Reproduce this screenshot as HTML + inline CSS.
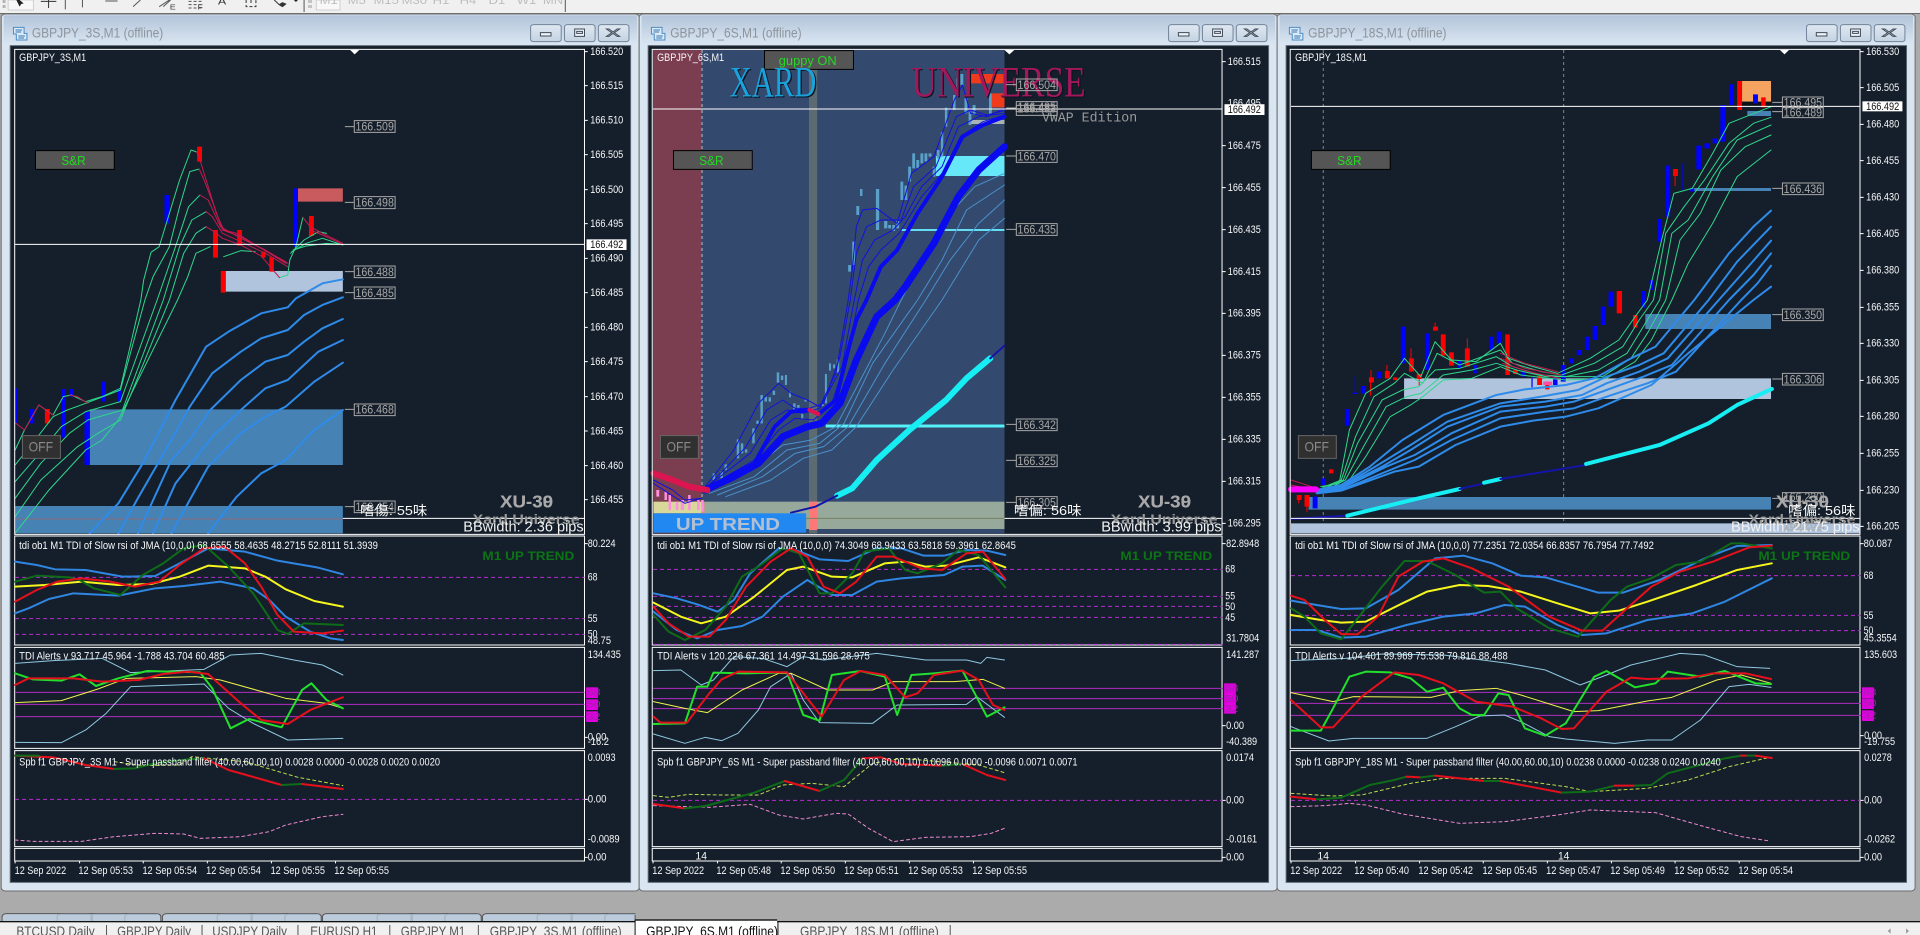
<!DOCTYPE html>
<html><head><meta charset="utf-8"><title>MetaTrader</title>
<style>
html,body{margin:0;padding:0;width:1920px;height:935px;overflow:hidden;background:#ababab}
svg{display:block;position:absolute;left:0;top:0}
svg *{vector-effect:non-scaling-stroke}
text{font-family:"Liberation Sans","Noto Sans CJK SC",sans-serif;font-size:32px;fill:#f6f7f8;stroke:none}
.ttl{font-size:42px;fill:#8d949c}
.tab{font-size:41px;fill:#555}
.tb{font-size:32px;fill:#bdbdbd}
.lb{fill:#a8a8a8;font-size:35px}
.bx{fill:none;stroke:#a8a8a8;stroke-width:1}
.tk{fill:none;stroke:#a8a8a8;stroke-width:1}
.big{font-weight:bold;fill:#a8a8a8;font-size:54px}
.xu2{font-weight:bold;fill:#9a9a9a;font-size:42px}
.bbw{fill:#f2f2f2;font-size:44px}
.cn{fill:#f8f8f8;font-size:40px}
.tr{font-weight:bold;fill:#0b7414;font-size:36px}
.sr{fill:#23d923;font-size:38px}
.off{fill:#8a8a8a;font-size:41px}
.mg{fill:#a81cb0;font-size:30px}
polyline{fill:none;stroke-linejoin:round;stroke-linecap:round}
.g{stroke:#2fd88c;stroke-width:1}
.r{stroke:#c21a4e;stroke-width:1}
.mb{stroke:#2e8bea;stroke-width:2}
.ub{stroke:#2f86e2;stroke-width:2}
.uy{stroke:#f6f61e;stroke-width:2}
.ur{stroke:#e5101c;stroke-width:2}
.ug{stroke:#0e6b18;stroke-width:2}
.lc{stroke:#8fc8e0;stroke-width:1}
.ly{stroke:#f1f14e;stroke-width:1}
.lg{stroke:#22e02c;stroke-width:2}
.dy{stroke:#bcdc4c;stroke-width:1;stroke-dasharray:3 3}
.dp{stroke:#f08ad0;stroke-width:1;stroke-dasharray:3 3}
.dm{stroke:#b52cd0;stroke-width:1;stroke-dasharray:4 3;fill:none}
.sm{stroke:#b02cc4;stroke-width:1;fill:none}
.w{stroke:#fff;stroke-width:1;fill:none}
.dash{stroke:#7d8590;stroke-width:1;stroke-dasharray:3 3;fill:none}
.tb1{stroke:#1212dd;stroke-width:1}
.tl{stroke:#4a92cc;stroke-width:1}
.cy{stroke:#16eef4;stroke-width:4}
.db{stroke:#1414a8;stroke-width:2}
</style></head><body>
<svg width="1920" height="935" viewBox="0 0 1920 935" xmlns="http://www.w3.org/2000/svg">
<defs>
<linearGradient id="tg" x1="0" y1="0" x2="0" y2="1"><stop offset="0" stop-color="#b3c5da"/><stop offset="1" stop-color="#dbe7f3"/></linearGradient>
<linearGradient id="bg" x1="0" y1="0" x2="0" y2="1"><stop offset="0" stop-color="#dfe8f1"/><stop offset="1" stop-color="#c4d3e2"/></linearGradient>
<g id="chrome">
<rect x="3" y="42" width="1563" height="2631" rx="10" fill="#d9e6f2" stroke="#6e6e6e"/>
<rect x="9" y="46" width="1552" height="92" fill="url(#tg)"/>
<rect x="25" y="137" width="1520" height="2510" fill="#151f2b" stroke="#5d6873"/>
<path d="M33 82h26v18h7v20h-26v-18h-7z" fill="#dfe9f5" stroke="#4a8cc4"/>
<path d="M38 90h16M38 96h14M45 108h16M45 114h14" stroke="#2f76b8" fill="none"/>
<g fill="url(#bg)" stroke="#73849a"><rect x="1300" y="74" width="75" height="51" rx="7"/><rect x="1383" y="74" width="75" height="51" rx="7"/><rect x="1466" y="74" width="75" height="51" rx="7"/></g>
<rect x="1324" y="98" width="26" height="10" fill="#eef3f8" stroke="#3f4a58"/>
<rect x="1408" y="87" width="24" height="22" fill="#eef3f8" stroke="#3f4a58"/><rect x="1413" y="94" width="14" height="6" fill="none" stroke="#3f4a58"/>
<path d="M1492 87l10 9 10-9h6l-13 11 13 11h-6l-10-9-10 9h-6l13-11-13-11z" fill="#eef3f8" stroke="#3f4a58"/>
</g>
<g id="panels" class="w">
<rect x="36" y="148" width="1396" height="1455"/>
<rect x="36" y="1608" width="1396" height="327"/>
<rect x="36" y="1942" width="1396" height="303"/>
<rect x="36" y="2252" width="1396" height="288"/>
<rect x="36" y="2545" width="1396" height="38"/>
</g>
<g id="bt"><rect x="0" y="0" width="193" height="56" fill="#555" stroke="#000"/></g>
<g id="of"><rect x="0" y="0" width="93" height="68" fill="#303030" stroke="#666"/></g>
</defs>

<!-- toolbar -->
<rect x="0" y="0" width="1920" height="13" fill="#f0f0f0"/>
<rect x="0" y="13" width="1920" height="1" fill="#6a6a6a"/>
<g transform="scale(.40816 .33333)">
<rect x="20" y="0" width="62" height="30" fill="#f8f8f8" stroke="#cfcfcf"/>
<rect x="775" y="0" width="58" height="30" fill="#f8f8f8" stroke="#cfcfcf"/>
<path d="M40 0l8 20 4-8 6-2-10-10z" fill="#222"/>
<path d="M119 0v24M100 4h38" stroke="#333" fill="none"/>
<path d="M160 0v28M202 0v22M258 3h30M326 20l18-20M745 0v36M1385 0v36" stroke="#555" fill="none"/>
<path d="M8 0v26M12 0v26M757 0v26M762 0v26" stroke="#999" stroke-dasharray="3 2" fill="none"/>
<path d="M390 20l25-20M400 20l18-20" stroke="#555" fill="none"/>
<path d="M462 4h32M462 14h32M462 24h32" stroke="#555" stroke-dasharray="3 2" fill="none"/>
<path d="M603 0v20h24V0M615 0v14" stroke="#333" stroke-dasharray="3 2" fill="none"/>
<path d="M672 0l12 14 8-6 8 4-8 8-8-6" stroke="#333" fill="#333"/><path d="M720 0h10l-5 6z" fill="#222"/>
<text x="416" y="28" style="font-size:22px;fill:#444">E</text><text x="484" y="28" style="font-size:22px;fill:#444">F</text><text x="534" y="14" style="font-size:30px;fill:#333">A</text>
<text class="tb" x="783" y="12">M1</text><text class="tb" x="852" y="12">M5</text><text class="tb" x="915" y="12">M15</text><text class="tb" x="984" y="12">M30</text><text class="tb" x="1060" y="12">H1</text><text class="tb" x="1126" y="12">H4</text><text class="tb" x="1197" y="12">D1</text><text class="tb" x="1266" y="12">W1</text><text class="tb" x="1330" y="12">MN</text>
</g>

<!-- bottom tabs -->
<g transform="translate(0 0) scale(.40816 .33333)">
<path d="M5 2765v-14q0-10 12-10h365q12 0 12 10v14zM398 2765v-14q0-10 12-10h365q12 0 12 10v14zM790 2765v-14q0-10 12-10h365q12 0 12 10v14zM1182 2765v-14q0-10 12-10h362v24z" fill="#bccbdb" stroke="#555"/>
<path d="M140 2765v-14q0-8 8-8h70q8 0 8 8v14M223 2765v-14q0-8 8-8h70M306 2765v-14q0-8 8-8h74M532 2765v-14q0-8 8-8h70q8 0 8 8v14M615 2765v-14q0-8 8-8h70M698 2765v-14q0-8 8-8h74M924 2765v-14q0-8 8-8h70q8 0 8 8v14M1007 2765v-14q0-8 8-8h70M1090 2765v-14q0-8 8-8h74M1316 2765v-14q0-8 8-8h70q8 0 8 8v14M1399 2765v-14q0-8 8-8h70M1482 2765v-14q0-8 8-8h70" fill="none" stroke="#9fb0c2"/>
<rect x="0" y="2764" width="4704" height="41" fill="#f0f0f0"/>
<rect x="0" y="2763" width="4704" height="4" fill="#111"/>
<rect x="1556" y="2762" width="348" height="43" fill="#fff"/>
<rect x="1556" y="2758" width="348" height="4" fill="#111"/>
<path d="M1556 2760v45M1906 2764v41" stroke="#111" stroke-width="1"/>
<path d="M261 2775v30M495 2775v30M730 2775v30M955 2775v30M1172 2775v30M2328 2775v30" stroke="#555" fill="none"/>
<text class="tab" x="40" y="2808" textLength="192" lengthAdjust="spacingAndGlyphs">BTCUSD Daily</text>
<text class="tab" x="287" y="2808" textLength="181" lengthAdjust="spacingAndGlyphs">GBPJPY Daily</text>
<text class="tab" x="520" y="2808" textLength="183" lengthAdjust="spacingAndGlyphs">USDJPY Daily</text>
<text class="tab" x="760" y="2808" textLength="165" lengthAdjust="spacingAndGlyphs">EURUSD H1</text>
<text class="tab" x="982" y="2808" textLength="158" lengthAdjust="spacingAndGlyphs">GBPJPY M1</text>
<text class="tab" x="1200" y="2808" textLength="323" lengthAdjust="spacingAndGlyphs">GBPJPY_3S,M1 (offline)</text>
<text class="tab" style="fill:#111" x="1583" y="2808" textLength="323" lengthAdjust="spacingAndGlyphs">GBPJPY_6S,M1 (offline)</text>
<text class="tab" x="1960" y="2808" textLength="340" lengthAdjust="spacingAndGlyphs">GBPJPY_18S,M1 (offline)</text>
<path d="M4632 2785l-7 8 7 8zM4670 2785l7 8-7 8z" fill="#999"/>
</g>

<!-- WINDOW 1 -->
<g transform="scale(.40816 .33333)">
<use href="#chrome"/>
<text class="ttl" x="78" y="113" textLength="322" lengthAdjust="spacingAndGlyphs">GBPJPY_3S,M1 (offline)</text>
<path d="M553 813h287v62H553z" fill="#b0c4de"/>
<path d="M730 565h110v40H730z" fill="#c95a5e"/>
<path d="M220 1228h620v167H220z" fill="#4682b4"/>
<path d="M37 1518h803v82H37z" fill="#4682b4"/>
<path d="M37 1557h803" stroke="#8c6a78" fill="none"/>
<path d="M403 585h12v85h-12zM718 565h12v175h-12zM37 1165h6v105h-6zM72 1227h12v43H72zM150 1167h11v146h-11zM170 1167h11v23h-11zM248 1145h11v60h-11zM288 1165h10v40h-10zM207 1235h13v160h-13z" fill="#00f"/>
<path d="M483 440h12v45h-12zM522 690h12v83h-12zM581 690h12v47h-12zM640 755h11v18h-11zM660 772h11v43h-11zM757 648h12v60h-12zM541 813h12v65h-12zM110 1227h12v43h-12z" fill="#f00"/>
<polyline class="g" points="37,1350 60,1290 95,1215 130,1245 155,1190 175,1185 210,1205 250,1190 295,1165 345,900 352,840 370,757 390,740 410,660 440,540 468,450 482,456"/>
<polyline class="g" points="37,1395 80,1330 130,1250 165,1230 210,1210 295,1170 355,900 375,830 415,740 440,620 465,515 488,507"/>
<polyline class="g" points="37,1445 90,1370 150,1280 210,1235 295,1205 385,900 430,740 462,620 490,585"/>
<polyline class="g" points="37,1495 100,1390 170,1300 215,1260 300,1230 400,900 440,740 470,660 505,635"/>
<polyline class="g" points="37,1550 100,1440 190,1340 240,1300 295,1260 415,900 450,760 480,700 505,680"/>
<polyline class="g" points="37,1600 120,1470 210,1350 250,1320 290,1260 435,900 460,830 480,760 515,740"/>
<polyline class="g" points="548,770 590,752 625,755"/>
<polyline class="g" points="685,833 705,825 710,780 725,740 742,652"/>
<polyline class="g" points="712,760 745,720 780,695 800,700"/>
<polyline class="g" points="715,755 750,730 790,715 840,735"/>
<polyline class="g" points="718,750 750,738 800,730 840,733"/>
<polyline class="r" points="482,456 490,480 510,560 530,640 548,690 580,700 620,730 660,760 700,790"/>
<polyline class="r" points="488,507 500,540 525,620 545,690 590,710 640,745 700,785"/>
<polyline class="r" points="490,585 510,600 540,680 590,715 650,750 705,790"/>
<polyline class="r" points="505,635 520,650 545,700 590,725 650,760 705,800"/>
<polyline class="r" points="505,680 525,695 545,715 590,735 640,768 685,833"/>
<polyline class="r" points="742,652 760,680 790,700 840,730"/>
<polyline class="r" points="760,690 790,705 840,733"/>
<polyline class="r" points="37,1268 60,1290 95,1215 130,1245"/>
<polyline class="r" points="170,1185 190,1190 215,1210"/>
<polyline class="mb" points="220,1600 290,1510 350,1390 430,1200 505,1040 560,995 640,940 705,922 725,895 790,850 840,838"/>
<polyline class="mb" points="290,1600 340,1490 420,1320 465,1220 520,1120 590,1055 640,1015 705,990 745,945 790,915 840,892"/>
<polyline class="mb" points="338,1600 420,1380 465,1320 515,1230 590,1140 650,1085 705,1065 745,1025 790,985 840,957"/>
<polyline class="mb" points="375,1600 430,1450 520,1310 590,1230 650,1165 705,1140 780,1055 840,1020"/>
<polyline class="mb" points="420,1600 510,1400 590,1300 650,1250 700,1220 770,1145 840,1088"/>
<polyline class="mb" points="510,1600 580,1490 640,1420 700,1380 770,1290 840,1230"/>
<rect x="1437" y="718" width="98" height="32" fill="#fff"/>
<path d="M37 733h1395" class="w"/>
<path d="M840 1555h592" class="w"/>
<use href="#panels"/>
<path d="M858 150h22l-11 13z" fill="#fff"/>
<path d="M1432 155h8M1432 257h8M1432 361h8M1432 464h8M1432 569h8M1432 671h8M1432 775h8M1432 878h8M1432 982h8M1432 1085h8M1432 1190h8M1432 1293h8M1432 1397h8M1432 1499h8M1432 1631h8M1432 2212h8M1432 2398h8M1432 2572h8M37 2583v7M195 2583v7M351 2583v7M508 2583v7M665 2583v7M822 2583v7" class="w"/>
<text x="47" y="183" textLength="164" lengthAdjust="spacingAndGlyphs">GBPJPY_3S,M1</text>
<g><text x="1446" y="165" textLength="81" lengthAdjust="spacingAndGlyphs">166.520</text><text x="1446" y="267" textLength="81" lengthAdjust="spacingAndGlyphs">166.515</text><text x="1446" y="371" textLength="81" lengthAdjust="spacingAndGlyphs">166.510</text><text x="1446" y="474" textLength="81" lengthAdjust="spacingAndGlyphs">166.505</text><text x="1446" y="579" textLength="81" lengthAdjust="spacingAndGlyphs">166.500</text><text x="1446" y="681" textLength="81" lengthAdjust="spacingAndGlyphs">166.495</text><text x="1446" y="785" textLength="81" lengthAdjust="spacingAndGlyphs">166.490</text><text x="1446" y="888" textLength="81" lengthAdjust="spacingAndGlyphs">166.485</text><text x="1446" y="992" textLength="81" lengthAdjust="spacingAndGlyphs">166.480</text><text x="1446" y="1095" textLength="81" lengthAdjust="spacingAndGlyphs">166.475</text><text x="1446" y="1200" textLength="81" lengthAdjust="spacingAndGlyphs">166.470</text><text x="1446" y="1303" textLength="81" lengthAdjust="spacingAndGlyphs">166.465</text><text x="1446" y="1407" textLength="81" lengthAdjust="spacingAndGlyphs">166.460</text><text x="1446" y="1509" textLength="81" lengthAdjust="spacingAndGlyphs">166.455</text></g>
<text style="fill:#111" x="1446" y="744" textLength="81" lengthAdjust="spacingAndGlyphs">166.492</text>
<g transform="translate(87 452)"><use href="#bt"/></g><text class="sr" x="150" y="495" textLength="60" lengthAdjust="spacingAndGlyphs">S&amp;R</text>
<g transform="translate(55 1307)"><use href="#of"/></g><text class="off" x="70" y="1355" textLength="60" lengthAdjust="spacingAndGlyphs">OFF</text>
<path class="tk" d="M845 380h23M845 607h23M845 815h23M845 878h23M845 1228h23M845 1520h23"/>
<rect class="bx" x="868" y="362" width="100" height="35"/><rect class="bx" x="868" y="590" width="100" height="36"/><rect class="bx" x="868" y="798" width="100" height="35"/><rect class="bx" x="868" y="861" width="100" height="35"/><rect class="bx" x="868" y="1212" width="100" height="35"/><rect class="bx" x="868" y="1503" width="100" height="35"/>
<text class="lb" x="871" y="392" textLength="94" lengthAdjust="spacingAndGlyphs">166.509</text><text class="lb" x="871" y="620" textLength="94" lengthAdjust="spacingAndGlyphs">166.498</text><text class="lb" x="871" y="828" textLength="94" lengthAdjust="spacingAndGlyphs">166.488</text><text class="lb" x="871" y="891" textLength="94" lengthAdjust="spacingAndGlyphs">166.485</text><text class="lb" x="871" y="1241" textLength="94" lengthAdjust="spacingAndGlyphs">166.468</text><text class="lb" x="871" y="1533" textLength="94" lengthAdjust="spacingAndGlyphs">166.454</text>
<text class="cn" x="882" y="1545" textLength="165" lengthAdjust="spacingAndGlyphs">嗜傷: 55味</text>
<text class="big" x="1225" y="1522" textLength="130" lengthAdjust="spacingAndGlyphs">XU-30</text><text class="big" x="1225" y="1522" textLength="130" lengthAdjust="spacingAndGlyphs">XU-39</text>
<text class="xu2" x="1158" y="1572" textLength="262" lengthAdjust="spacingAndGlyphs">Xard Universe</text>
<text class="bbw" x="1135" y="1594" textLength="295" lengthAdjust="spacingAndGlyphs">BBwidth: 2.36 pips</text>
<!-- tdi -->
<path class="dm" d="M37 1732h1395M37 1856h1395M37 1903h1395"/>
<polyline class="ub" points="37,1685 90,1695 135,1708 210,1710 300,1730 380,1728 440,1690 510,1645 600,1655 680,1682 780,1703 840,1723"/>
<polyline class="ub" points="37,1840 70,1825 120,1797 180,1780 290,1787 380,1765 450,1758 540,1745 620,1765 660,1800 700,1850 760,1895 810,1915 840,1920"/>
<polyline class="uy" points="37,1760 110,1755 200,1745 290,1755 370,1752 440,1730 510,1697 600,1705 650,1730 700,1768 770,1803 840,1820"/>
<polyline class="ug" points="37,1745 90,1727 170,1732 195,1740 230,1765 295,1785 350,1725 400,1690 450,1645 500,1635 560,1700 620,1780 680,1890 705,1902 745,1870 840,1875"/>
<polyline class="ur" points="37,1805 90,1770 140,1745 200,1735 270,1745 330,1760 390,1745 440,1695 500,1645 550,1640 600,1690 640,1760 680,1845 720,1895 790,1900 840,1892"/>
<text x="47" y="1647" textLength="879" lengthAdjust="spacingAndGlyphs">tdi ob1 M1 TDI of Slow rsi of JMA (10,0,0) 68.6555 58.4635 48.2715 52.8111 51.3939</text>
<text class="tr" x="1182" y="1680" textLength="225" lengthAdjust="spacingAndGlyphs">M1 UP TREND</text>
<text x="1440" y="1641" textLength="68" lengthAdjust="spacingAndGlyphs">80.224</text><text x="1440" y="1742" textLength="24" lengthAdjust="spacingAndGlyphs">68</text><text x="1440" y="1866" textLength="24" lengthAdjust="spacingAndGlyphs">55</text><text x="1440" y="1913" textLength="24" lengthAdjust="spacingAndGlyphs">50</text><text x="1440" y="1932" textLength="57" lengthAdjust="spacingAndGlyphs">48.75</text>
<!-- alerts -->
<path class="sm" d="M37 2077h1395M37 2113h1395M37 2150h1395"/>
<rect x="1436" y="2062" width="29" height="32" fill="#e000e0"/><rect x="1436" y="2098" width="29" height="32" fill="#e000e0"/><rect x="1436" y="2134" width="29" height="32" fill="#e000e0"/>
<text class="mg" x="1438" y="2087">68</text><text class="mg" x="1438" y="2123">50</text><text class="mg" x="1438" y="2160">32</text>
<polyline class="lc" points="37,1990 130,1982 250,1975 320,2018 500,2008 565,1965 640,1960 720,1980 790,1995 840,2025"/>
<polyline class="lc" points="37,2227 150,2228 210,2190 260,2140 320,2060 500,2052 560,2125 620,2170 705,2220 840,2215"/>
<polyline class="ly" points="37,2108 150,2102 240,2067 310,2035 480,2030 540,2040 700,2095 800,2110 840,2125"/>
<polyline class="lg" points="37,2020 80,2038 150,2042 195,2023 235,2058 290,2035 360,2013 490,2017 520,2065 565,2185 610,2157 690,2182 740,2070 763,2050 800,2100 840,2125"/>
<polyline class="ur" points="37,2055 70,2035 180,2035 250,2045 340,2040 400,2022 460,2015 510,2022 590,2110 640,2160 705,2172 760,2130 840,2092"/>
<text x="47" y="1978" textLength="503" lengthAdjust="spacingAndGlyphs">TDI Alerts v 93.717 45.964 -1.788 43.704 60.485</text>
<text x="1440" y="1974" textLength="81" lengthAdjust="spacingAndGlyphs">134.435</text><text x="1440" y="2222" textLength="46" lengthAdjust="spacingAndGlyphs">0.00</text><text x="1440" y="2235" textLength="52" lengthAdjust="spacingAndGlyphs">-16.2</text>
<!-- spb -->
<path class="dm" d="M37 2398h1395"/>
<polyline class="dy" points="280,2285 350,2297 440,2295 470,2270 600,2285 730,2332 840,2357"/>
<polyline class="dp" points="37,2520 80,2524 200,2524 280,2510 380,2500 450,2502 490,2515 590,2510 660,2495 700,2475 790,2450 840,2443"/>
<polyline class="ur" points="37,2267 130,2272 210,2295 280,2307"/><polyline class="ug" points="37,2267 95,2267" /><polyline class="ug" points="280,2307 330,2305 380,2290 460,2278 500,2275"/><polyline class="ur" points="500,2275 560,2310 690,2355"/><polyline class="ug" points="690,2355 740,2352"/><polyline class="ur" points="740,2352 840,2367"/>
<text x="47" y="2297" textLength="1031" lengthAdjust="spacingAndGlyphs">Spb f1 GBPJPY_3S M1 - Super passband filter (40.00,60.00,10) 0.0028 0.0000 -0.0028 0.0020 0.0020</text>
<text x="1440" y="2283" textLength="68" lengthAdjust="spacingAndGlyphs">0.0093</text><text x="1440" y="2408" textLength="46" lengthAdjust="spacingAndGlyphs">0.00</text><text x="1440" y="2528" textLength="78" lengthAdjust="spacingAndGlyphs">-0.0089</text>
<text x="1440" y="2582" textLength="46" lengthAdjust="spacingAndGlyphs">0.00</text>
<text x="36" y="2622" textLength="126" lengthAdjust="spacingAndGlyphs">12 Sep 2022</text><text x="192" y="2622" textLength="134" lengthAdjust="spacingAndGlyphs">12 Sep 05:53</text><text x="349" y="2622" textLength="134" lengthAdjust="spacingAndGlyphs">12 Sep 05:54</text><text x="505" y="2622" textLength="134" lengthAdjust="spacingAndGlyphs">12 Sep 05:54</text><text x="663" y="2622" textLength="133" lengthAdjust="spacingAndGlyphs">12 Sep 05:55</text><text x="819" y="2622" textLength="134" lengthAdjust="spacingAndGlyphs">12 Sep 05:55</text>
</g>

<!-- WINDOW 2 -->
<g transform="translate(640 0) scale(.40816 .33333)">
<use href="#chrome" x="-5"/>
<text class="ttl" x="74" y="113" textLength="322" lengthAdjust="spacingAndGlyphs">GBPJPY_6S,M1 (offline)</text>
<rect x="32" y="150" width="119" height="1450" fill="#7a3e50"/>
<rect x="151" y="150" width="742" height="1450" fill="#34496e"/>
<rect x="414" y="150" width="20" height="1450" fill="#5c6a72"/>
<rect x="33" y="1505" width="118" height="35" fill="#d8d89a"/>
<rect x="158" y="1505" width="735" height="82" fill="#96a99a"/>
<rect x="414" y="1505" width="20" height="85" fill="#ff7878"/>
<path d="M151 1505h7v85h-7z" fill="#e88a80"/>
<path d="M158 1555h735" stroke="#777f5f" fill="none"/>
<path class="dash" style="stroke:#b8bcc4" d="M152 150v1370"/>
<path d="M805 222h88v28h-88zM862 280h31v42h-31z" fill="#f03a1c"/>
<rect x="725" y="468" width="168" height="60" fill="#67e8f9"/>
<rect x="805" y="360" width="88" height="12" fill="#a7b4b4"/>
<path d="M640 690h253" stroke="#64dcf2" stroke-width="2" fill="none"/>
<path d="M455 1278h438" stroke="#55f0f8" stroke-width="3" fill="none"/>
<path d="M520 725h7v70h-7zM510 795h7v20h-7zM530 618h7v27h-7zM539 567h6v21h-6zM578 567h8v123h-8zM598 663h8v22h-8zM608 675h7v10h-7zM618 675h7v18h-7zM628 663h7v22h-7zM638 545h7v55h-7zM648 557h7v43h-7zM657 500h7v45h-7zM667 460h7v45h-7zM677 480h7v25h-7zM687 460h7v30h-7zM697 460h7v25h-7zM707 460h7v10h-7zM717 500h7v30h-7zM727 450h7v25h-7zM737 397h6v73h-6zM747 323h6v57h-6zM767 285h6v45h-6zM775 235h7v35h-7zM785 222h7v33h-7zM795 295h7v45h-7zM805 330h7v45h-7zM815 315h7v30h-7zM855 280h7v65h-7zM178 1420h6v20h-6zM197 1415h6v20h-6zM207 1393h6v17h-6zM237 1318h6v57h-6zM247 1330h6v30h-6zM257 1348h6v10h-6zM275 1285h6v45h-6zM285 1262h6v10h-6zM295 1185h6v85h-6zM305 1190h6v15h-6zM315 1192h6v13h-6zM325 1172h6v13h-6zM335 1117h6v31h-6zM345 1127h6v13h-6zM355 1125h5v30h-5zM365 1175h5v17h-5zM375 1210h6v20h-6zM385 1215h6v15h-6zM395 1240h5v15h-5zM403 1198h5v7h-5zM444 1205h6v13h-6zM453 1122h5v88h-5zM463 1090h5v22h-5zM473 1093h5v12h-5zM482 1078h6v40h-6z" fill="#5aa0c8"/>
<path d="M40 1470h7v20h-7zM60 1475h6v25h-6zM70 1485h6v45h-6zM88 1505h6v25h-6zM100 1500h8v30h-8zM118 1485h6v45h-6zM140 1500h6v30h-6zM150 1500h6v35h-6z" fill="#ff90e0"/>
<polyline class="tb1" points="510,900 520,810 530,680 545,630 580,625 630,670 665,520 720,470 770,300 790,255 810,340 850,350 893,325"/>
<polyline class="tb1" points="515,900 530,760 555,680 590,660 640,660 670,560 725,500 775,350 810,330 850,345 893,332"/>
<polyline class="tb1" points="525,900 545,780 575,720 620,690 650,650 690,560 740,500 780,380 830,350 893,340"/>
<polyline class="tb1" points="535,900 560,800 590,750 635,700 690,590 740,520 785,410 840,365 893,345"/>
<polyline class="tb1" points="160,1460 230,1350 290,1210 340,1150 370,1180 410,1200 440,1220 480,1120 510,900"/>
<polyline class="tb1" points="170,1455 260,1340 310,1230 350,1200 380,1225 415,1225 450,1210 490,1070 515,900"/>
<polyline class="tb1" points="165,1460 270,1360 320,1260 360,1230 400,1240 440,1225 495,1100 525,900"/>
<polyline class="tb1" points="165,1462 280,1380 340,1290 380,1255 425,1260 470,1210 510,1060 535,900"/>
<polyline class="tl" points="160,1470 260,1420 350,1335 420,1320 480,1280 540,1140 600,1000 640,900 700,760 760,640 820,560 893,520"/>
<polyline class="tl" points="170,1480 280,1430 360,1350 440,1330 500,1270 570,1090 680,900 740,780 800,630 893,555"/>
<polyline class="tl" points="190,1485 300,1430 380,1360 450,1340 510,1280 600,1090 700,900 760,780 830,670 893,600"/>
<polyline class="tl" points="210,1490 320,1440 400,1375 470,1350 530,1280 620,1110 740,900 790,800 830,720 893,655"/>
<polyline style="stroke:#0a0aee;stroke-width:4" points="165,1465 280,1390 330,1280 370,1235 415,1230"/>
<polyline style="stroke:#0a0aee;stroke-width:4" points="440,1240 480,1200 510,1050 530,960 555,900 590,800 630,750 680,640 740,530 790,410 840,375 893,350"/>
<polyline style="stroke:#0a0aee;stroke-width:7" points="160,1470 230,1430 290,1390 350,1310 410,1280 445,1270 490,1210 530,1080 580,950 625,900 650,860 720,730 780,590 830,510 893,440"/>
<polyline style="stroke:#dc1450;stroke-width:6" points="33,1420 80,1440 120,1460 165,1470"/>
<polyline style="stroke:#dc1450;stroke-width:4" points="415,1230 437,1242"/>
<polyline class="tb1" points="33,1440 80,1470 110,1500 150,1495"/><polyline class="tb1" points="33,1450 70,1480 110,1510 150,1495"/>
<polyline class="cy" style="stroke-width:6" points="483,1487 520,1465 580,1380 660,1290 750,1200 800,1135 858,1075"/>
<polyline class="db" points="858,1075 893,1037"/>
<polyline class="db" points="370,1538 430,1520 483,1487"/>
<rect x="33" y="1540" width="374" height="58" fill="#2088f0"/>
<text style="font-weight:bold;fill:#b4c0d2;font-size:52px" x="88" y="1590" textLength="255" lengthAdjust="spacingAndGlyphs">UP TREND</text>
<rect x="1432" y="313" width="98" height="32" fill="#fff"/>
<path d="M32 327h1395" class="w"/>
<path d="M893 1555h534" class="w"/>
<use href="#panels" x="-6"/>
<path d="M893 150h24l-12 13z" fill="#fff"/>
<path d="M1427 185h8M1427 437h8M1427 563h8M1427 689h8M1427 815h8M1427 940h8M1427 1066h8M1427 1192h8M1427 1318h8M1427 1444h8M1427 1570h8M1427 1631h8M1427 2177h8M1427 2401h8M1427 2572h8M32 2583v7M190 2583v7M346 2583v7M503 2583v7M660 2583v7M817 2583v7" class="w"/>
<text x="42" y="183" textLength="164" lengthAdjust="spacingAndGlyphs">GBPJPY_6S,M1</text>
<g transform="translate(305 152)"><rect width="218" height="56" fill="#555" stroke="#000"/></g><text class="sr" x="340" y="195" textLength="142" lengthAdjust="spacingAndGlyphs">guppy ON</text>
<g style="font-family:'Liberation Serif',serif"><text x="223" y="293" style="font-family:'Liberation Serif',serif;font-size:130px;fill:#0a1420" textLength="212" lengthAdjust="spacingAndGlyphs">XARD</text><text x="220" y="290" style="font-family:'Liberation Serif',serif;font-size:130px;fill:#1aa2dc" textLength="212" lengthAdjust="spacingAndGlyphs">XARD</text>
<text x="668" y="293" style="font-family:'Liberation Serif',serif;font-size:130px;fill:#0a1420" textLength="427" lengthAdjust="spacingAndGlyphs">UNIVERSE</text><text x="665" y="290" style="font-family:'Liberation Serif',serif;font-size:130px;fill:#a3185c" textLength="427" lengthAdjust="spacingAndGlyphs">UNIVERSE</text>
<text x="985" y="365" style="font-family:'Liberation Mono',monospace;font-size:42px;fill:#9a9a9a" textLength="233" lengthAdjust="spacingAndGlyphs">VWAP Edition</text></g>
<text x="1440" y="195" textLength="81" lengthAdjust="spacingAndGlyphs">166.515</text><text x="1440" y="320" textLength="81" lengthAdjust="spacingAndGlyphs">166.495</text><rect x="1432" y="313" width="98" height="32" fill="#fff"/><text x="1440" y="447" textLength="81" lengthAdjust="spacingAndGlyphs">166.475</text><text x="1440" y="573" textLength="81" lengthAdjust="spacingAndGlyphs">166.455</text><text x="1440" y="699" textLength="81" lengthAdjust="spacingAndGlyphs">166.435</text><text x="1440" y="825" textLength="81" lengthAdjust="spacingAndGlyphs">166.415</text><text x="1440" y="950" textLength="81" lengthAdjust="spacingAndGlyphs">166.395</text><text x="1440" y="1076" textLength="81" lengthAdjust="spacingAndGlyphs">166.375</text><text x="1440" y="1202" textLength="81" lengthAdjust="spacingAndGlyphs">166.355</text><text x="1440" y="1328" textLength="81" lengthAdjust="spacingAndGlyphs">166.335</text><text x="1440" y="1454" textLength="81" lengthAdjust="spacingAndGlyphs">166.315</text><text x="1440" y="1580" textLength="81" lengthAdjust="spacingAndGlyphs">166.295</text>
<text style="fill:#111" x="1440" y="339" textLength="81" lengthAdjust="spacingAndGlyphs">166.492</text>
<g transform="translate(82 452)"><use href="#bt"/></g><text class="sr" x="145" y="495" textLength="60" lengthAdjust="spacingAndGlyphs">S&amp;R</text>
<g transform="translate(50 1307)"><use href="#of"/></g><text class="off" x="65" y="1355" textLength="60" lengthAdjust="spacingAndGlyphs">OFF</text>
<path class="tk" d="M897 254h25M897 324h25M897 468h25M897 688h25M897 1273h25M897 1381h25M897 1507h25"/>
<rect class="bx" x="922" y="237" width="100" height="35"/><rect class="bx" x="922" y="305" width="100" height="30"/><rect class="bx" x="922" y="316" width="100" height="30"/><rect class="bx" x="922" y="452" width="100" height="35"/><rect class="bx" x="922" y="671" width="100" height="35"/><rect class="bx" x="922" y="1257" width="100" height="35"/><rect class="bx" x="922" y="1365" width="100" height="35"/><rect class="bx" x="922" y="1490" width="100" height="35"/>
<text class="lb" x="925" y="267" textLength="94" lengthAdjust="spacingAndGlyphs">166.504</text><text class="lb" x="925" y="333" textLength="94" lengthAdjust="spacingAndGlyphs">166.485</text><text class="lb" x="925" y="337" textLength="94" lengthAdjust="spacingAndGlyphs">166.483</text><text class="lb" x="925" y="482" textLength="94" lengthAdjust="spacingAndGlyphs">166.470</text><text class="lb" x="925" y="701" textLength="94" lengthAdjust="spacingAndGlyphs">166.435</text><text class="lb" x="925" y="1287" textLength="94" lengthAdjust="spacingAndGlyphs">166.342</text><text class="lb" x="925" y="1395" textLength="94" lengthAdjust="spacingAndGlyphs">166.325</text><text class="lb" x="925" y="1520" textLength="94" lengthAdjust="spacingAndGlyphs">166.305</text>
<text class="cn" x="916" y="1545" textLength="166" lengthAdjust="spacingAndGlyphs">嗜偏: 56味</text>
<text class="big" x="1220" y="1522" textLength="130" lengthAdjust="spacingAndGlyphs">XU-30</text><text class="big" x="1220" y="1522" textLength="130" lengthAdjust="spacingAndGlyphs">XU-39</text>
<text class="xu2" x="1153" y="1572" textLength="262" lengthAdjust="spacingAndGlyphs">Xard Universe</text>
<text class="bbw" x="1130" y="1594" textLength="295" lengthAdjust="spacingAndGlyphs">BBwidth: 3.99 pips</text>
<!-- tdi -->
<path class="dm" d="M32 1708h1395M32 1789h1395M32 1819h1395M32 1852h1395M32 1933h1395"/>
<polyline class="ub" points="33,1780 90,1795 140,1813 190,1835 230,1800 270,1720 340,1645 380,1650 440,1678 510,1683 580,1645 640,1645 695,1667 745,1667 800,1650 850,1652 895,1665"/>
<polyline class="ub" points="33,1835 90,1890 140,1915 190,1890 250,1878 300,1850 350,1790 410,1740 470,1785 520,1785 580,1745 640,1735 745,1725 790,1700 840,1697 895,1740"/>
<polyline class="uy" points="33,1808 100,1850 150,1870 210,1850 280,1790 360,1710 400,1700 470,1730 520,1732 600,1690 650,1685 700,1700 750,1697 830,1672 895,1702"/>
<polyline class="ug" points="33,1845 70,1895 110,1920 160,1890 210,1820 250,1730 290,1700 350,1645 390,1660 440,1780 470,1780 520,1720 550,1655 610,1645 650,1710 680,1720 740,1690 780,1650 830,1665 895,1762"/>
<polyline class="ur" points="33,1820 70,1870 120,1910 170,1910 210,1860 260,1760 320,1685 370,1645 410,1670 450,1760 490,1780 530,1745 580,1670 620,1670 690,1705 740,1710 800,1660 840,1655 895,1737"/>
<text x="42" y="1647" textLength="879" lengthAdjust="spacingAndGlyphs">tdi ob1 M1 TDI of Slow rsi of JMA (10,0,0) 74.3049 68.9433 63.5818 59.3961 62.8645</text>
<text class="tr" x="1177" y="1680" textLength="225" lengthAdjust="spacingAndGlyphs">M1 UP TREND</text>
<text x="1436" y="1641" textLength="81" lengthAdjust="spacingAndGlyphs">82.8948</text><text x="1434" y="1718" textLength="24" lengthAdjust="spacingAndGlyphs">68</text><text x="1434" y="1799" textLength="24" lengthAdjust="spacingAndGlyphs">55</text><text x="1434" y="1830" textLength="24" lengthAdjust="spacingAndGlyphs">50</text><text x="1434" y="1863" textLength="24" lengthAdjust="spacingAndGlyphs">45</text><text x="1436" y="1925" textLength="81" lengthAdjust="spacingAndGlyphs">31.7804</text>
<!-- alerts -->
<path class="sm" d="M32 2065h1395M32 2096h1395M32 2126h1395"/>
<rect x="1431" y="2050" width="29" height="91" fill="#e000e0"/>
<text class="mg" x="1433" y="2075">68</text><text class="mg" x="1433" y="2106">50</text><text class="mg" x="1433" y="2136">32</text>
<polyline class="lc" points="33,2012 100,2010 150,2055 180,2040 230,1970 300,1975 360,2000 400,1970 450,1980 580,1960 700,1980 800,1980 835,1990 850,1972 893,1980"/>
<polyline class="lc" points="33,2202 110,2230 160,2212 200,2222 240,2200 290,2130 320,2060 370,2020 400,2100 440,2168 570,2170 630,2115 800,2113 825,2090 893,2152"/>
<polyline class="ly" points="33,2105 110,2125 165,2138 250,2070 340,2020 370,2020 460,2070 570,2070 620,2045 770,2045 840,2038 893,2065"/>
<polyline class="lg" points="33,2172 110,2170 140,2060 165,2060 180,2018 260,2020 360,2017 400,2145 440,2162 470,2025 540,2013 600,2030 630,2145 665,2025 720,2020 790,2012 820,2080 850,2150 893,2122"/>
<polyline class="ur" points="33,2150 50,2168 115,2168 170,2080 200,2038 240,2015 360,2017 445,2150 500,2040 540,2013 600,2025 650,2092 680,2080 720,2025 790,2012 830,2040 865,2115 893,2130"/>
<text x="42" y="1978" textLength="521" lengthAdjust="spacingAndGlyphs">TDI Alerts v 120.226 67.361 14.497 31.596 28.975</text>
<text x="1436" y="1974" textLength="81" lengthAdjust="spacingAndGlyphs">141.287</text><text x="1436" y="2187" textLength="44" lengthAdjust="spacingAndGlyphs">0.00</text><text x="1436" y="2235" textLength="76" lengthAdjust="spacingAndGlyphs">-40.389</text>
<!-- spb -->
<path class="dm" d="M32 2401h1395"/>
<polyline class="dy" points="33,2387 70,2392 120,2383 200,2385 290,2385 350,2355 420,2350 500,2360 570,2290 640,2275 830,2295 893,2318"/>
<polyline class="dp" points="33,2417 170,2422 270,2413 340,2445 400,2457 480,2440 510,2442 560,2485 620,2525 700,2512 810,2510 860,2500 893,2485"/>
<polyline class="ur" points="33,2412 110,2425"/><polyline class="ug" points="110,2425 160,2418 280,2378 355,2343"/><polyline class="ur" points="355,2343 440,2373"/><polyline class="ug" points="440,2373 500,2340 545,2275"/><polyline class="ur" points="545,2275 590,2272 640,2292 740,2297"/><polyline class="ug" points="740,2297 790,2292"/><polyline class="ur" points="790,2292 850,2325 895,2340"/>
<text x="42" y="2297" textLength="1030" lengthAdjust="spacingAndGlyphs">Spb f1 GBPJPY_6S M1 - Super passband filter (40.00,60.00,10) 0.0096 0.0000 -0.0096 0.0071 0.0071</text>
<text x="1436" y="2283" textLength="68" lengthAdjust="spacingAndGlyphs">0.0174</text><text x="1436" y="2411" textLength="44" lengthAdjust="spacingAndGlyphs">0.00</text><text x="1436" y="2528" textLength="76" lengthAdjust="spacingAndGlyphs">-0.0161</text>
<text x="1436" y="2582" textLength="44" lengthAdjust="spacingAndGlyphs">0.00</text>
<text x="136" y="2579" textLength="28" lengthAdjust="spacingAndGlyphs">14</text>
<text x="30" y="2622" textLength="127" lengthAdjust="spacingAndGlyphs">12 Sep 2022</text><text x="187" y="2622" textLength="134" lengthAdjust="spacingAndGlyphs">12 Sep 05:48</text><text x="344" y="2622" textLength="134" lengthAdjust="spacingAndGlyphs">12 Sep 05:50</text><text x="500" y="2622" textLength="134" lengthAdjust="spacingAndGlyphs">12 Sep 05:51</text><text x="657" y="2622" textLength="134" lengthAdjust="spacingAndGlyphs">12 Sep 05:53</text><text x="814" y="2622" textLength="134" lengthAdjust="spacingAndGlyphs">12 Sep 05:55</text>
</g>

<!-- WINDOW 3 -->
<g transform="translate(1280 0) scale(.40816 .33333)">
<use href="#chrome" x="-10"/>
<text class="ttl" x="69" y="113" textLength="339" lengthAdjust="spacingAndGlyphs">GBPJPY_18S,M1 (offline)</text>
<path class="dash" d="M106 150v1450M695 150v1450"/>
<rect x="1132" y="243" width="71" height="62" fill="#f4a460"/>
<rect x="1132" y="305" width="71" height="15" fill="#0c1218"/>
<path d="M1145 333h58v15h-58zM1005 564h198v9h-198zM895 942h308v45H895zM70 1491h1133v38H70z" fill="#4682b4"/>
<path d="M304 1135h899v62H304zM27 1570h1395v30H27z" fill="#b0c4de"/>
<path d="M1100 253h12v62h-12zM1159 283h12v27h-12zM1079 315h12v110h-12zM1060 415h12v15h-12zM1040 430h12v15h-12zM1020 437h12v71h-12zM944 497h12v153h-12zM924 657h12v68h-12zM986 490h3v80h-3zM1005 565h10v10h-10zM904 840h10v30h-10zM885 873h11v50h-11zM805 875h12v45h-12zM786 920h12v55h-12zM766 978h12v42h-12zM747 1010h10v40h-10zM727 1050h11v15h-11zM708 1075h10v15h-10zM688 1095h12v50h-12zM669 1132h11v23h-11zM616 1130h3v32h-3zM590 1115h10v15h-10zM512 1010h10v40h-10zM531 995h12v35h-12zM473 1095h9v25h-9zM434 1080h11v25h-11zM355 1000h12v110h-12zM296 980h12v110h-12zM237 1115h12v20h-12zM198 1158h12v22h-12zM183 1130h3v50h-3zM178 1178h12v4h-12zM159 1227h12v50h-12zM100 1435h12v20h-12zM80 1490h12v35H80z" fill="#00f"/>
<path d="M1120 243h12v87h-12zM1179 292h11v30h-11zM963 507h12v21h-12zM825 873h13v67h-13zM865 945h11v38h-11zM552 1003h11v122h-11zM571 1110h12v12h-12zM630 1128h12v27h-12zM650 1145h10v23h-10zM453 1045h12v55h-12zM414 1057h12v40h-12zM394 1003h12v64h-12zM375 980h12v12h-12zM335 1122h12v15h-12zM316 1075h12v40h-12zM257 1113h12v22h-12zM218 1132h12v15h-12zM277 1132h10v8h-10zM120 1408h11v12h-11zM60 1485h12v35H60zM41 1485h12v15H41z" fill="#f00"/>
<path d="M968 528v30M321 1045v30M341 1137v20M262 1095v18M223 1110v22M222 1147v40M459 1015v30M380 968v12M66 1520v15M46 1500v10" stroke="#f00" fill="none"/>
<path d="M645 1145h22v10h-22z" fill="#ff4da6"/>
<polyline class="g" points="100,1460 145,1450 170,1290 210,1180 270,1135 305,1075 345,1130 380,1025 420,1080 480,1085 540,1030 560,1075 620,1100 680,1120 760,1075 830,1020 870,950 900,900 935,720 965,580 1010,565 1060,460 1100,370 1203,320"/>
<polyline class="g" points="105,1462 150,1440 185,1310 230,1190 280,1150 305,1120 350,1150 385,1060 440,1095 540,1050 570,1090 640,1115 690,1125 770,1090 840,1040 880,960 915,900 945,700 990,620 1040,540 1100,430 1160,370 1203,352"/>
<polyline class="g" points="110,1464 155,1440 190,1330 250,1200 300,1170 340,1160 380,1110 440,1105 530,1070 570,1100 640,1125 700,1130 780,1110 850,1060 890,980 930,900 960,700 1000,660 1060,530 1120,420 1203,375"/>
<polyline class="g" points="120,1466 160,1440 200,1350 260,1220 310,1190 345,1180 400,1125 470,1110 530,1090 580,1110 650,1130 710,1130 790,1130 860,1075 900,1000 945,900 980,720 1030,640 1080,510 1140,440 1203,405"/>
<polyline class="g" points="130,1468 170,1440 210,1370 270,1250 320,1215 350,1190 400,1140 470,1135 540,1100 590,1125 660,1135 700,1140 800,1135 870,1085 910,1020 960,900 1000,790 1060,670 1120,530 1203,450"/>
<polyline class="r" points="540,1060 600,1090 680,1115"/><polyline class="r" points="540,1075 600,1105 690,1125"/><polyline class="r" points="545,1090 610,1115 685,1135"/>
<polyline class="r" points="27,1440 90,1465"/><polyline class="r" points="27,1455 90,1470"/>
<polyline class="mb" points="90,1470 150,1455 220,1400 300,1320 400,1245 530,1185 600,1168 700,1155 770,1135 860,1075 920,1040 1015,900 1100,760 1160,680 1203,632"/>
<polyline class="mb" points="90,1472 150,1460 240,1395 320,1335 410,1265 540,1210 640,1190 730,1170 800,1130 880,1095 940,1060 1050,900 1120,785 1203,680"/>
<polyline class="mb" points="90,1474 150,1462 250,1400 320,1350 410,1280 540,1220 650,1205 740,1185 800,1150 880,1115 950,1075 1075,900 1140,810 1203,722"/>
<polyline class="mb" points="90,1476 150,1465 260,1400 330,1365 420,1300 540,1235 650,1220 720,1205 800,1170 890,1130 960,1095 1100,900 1160,825 1203,760"/>
<polyline class="mb" points="90,1478 150,1470 270,1410 330,1380 420,1320 540,1255 650,1235 720,1225 800,1190 900,1150 970,1115 1130,900 1170,850 1203,797"/>
<polyline class="mb" points="90,1480 150,1472 280,1415 340,1400 430,1335 540,1280 620,1262 700,1250 780,1225 910,1155 1000,1060 1160,900 1203,860"/>
<polyline style="stroke:#ff00ff;stroke-width:6" points="27,1468 88,1468"/>
<polyline class="db" points="27,1557 165,1547"/>
<polyline class="cy" points="165,1547 340,1495 440,1467"/>
<polyline class="db" points="440,1467 500,1450"/>
<polyline class="cy" points="500,1448 540,1437"/>
<polyline class="db" points="540,1437 750,1395"/>
<polyline class="cy" points="750,1392 930,1335 1050,1270 1120,1215 1205,1167"/>
<rect x="1427" y="304" width="98" height="30" fill="#fff"/>
<path d="M27 319h1395" class="w"/>
<path d="M27 1555h1395" class="w"/>
<use href="#panels" x="-11"/>
<path d="M1225 150h22l-11 13z" fill="#fff"/>
<path d="M1422 155h8M1422 263h8M1422 373h8M1422 482h8M1422 592h8M1422 701h8M1422 811h8M1422 922h8M1422 1030h8M1422 1141h8M1422 1249h8M1422 1360h8M1422 1471h8M1422 1579h8M1422 1631h8M1422 2207h8M1422 2401h8M1422 2572h8M27 2583v7M185 2583v7M342 2583v7M498 2583v7M655 2583v7M812 2583v7M968 2583v7M1125 2583v7" class="w"/>
<text x="37" y="183" textLength="176" lengthAdjust="spacingAndGlyphs">GBPJPY_18S,M1</text>
<text x="1436" y="165" textLength="81" lengthAdjust="spacingAndGlyphs">166.530</text><text x="1436" y="273" textLength="81" lengthAdjust="spacingAndGlyphs">166.505</text><text x="1436" y="383" textLength="81" lengthAdjust="spacingAndGlyphs">166.480</text><text x="1436" y="492" textLength="81" lengthAdjust="spacingAndGlyphs">166.455</text><text x="1436" y="602" textLength="81" lengthAdjust="spacingAndGlyphs">166.430</text><text x="1436" y="711" textLength="81" lengthAdjust="spacingAndGlyphs">166.405</text><text x="1436" y="821" textLength="81" lengthAdjust="spacingAndGlyphs">166.380</text><text x="1436" y="932" textLength="81" lengthAdjust="spacingAndGlyphs">166.355</text><text x="1436" y="1040" textLength="81" lengthAdjust="spacingAndGlyphs">166.330</text><text x="1436" y="1151" textLength="81" lengthAdjust="spacingAndGlyphs">166.305</text><text x="1436" y="1259" textLength="81" lengthAdjust="spacingAndGlyphs">166.280</text><text x="1436" y="1370" textLength="81" lengthAdjust="spacingAndGlyphs">166.255</text><text x="1436" y="1481" textLength="81" lengthAdjust="spacingAndGlyphs">166.230</text><text x="1436" y="1589" textLength="81" lengthAdjust="spacingAndGlyphs">166.205</text>
<text style="fill:#111" x="1436" y="330" textLength="81" lengthAdjust="spacingAndGlyphs">166.492</text>
<g transform="translate(77 452)"><use href="#bt"/></g><text class="sr" x="140" y="495" textLength="60" lengthAdjust="spacingAndGlyphs">S&amp;R</text>
<g transform="translate(45 1307)"><use href="#of"/></g><text class="off" x="60" y="1355" textLength="60" lengthAdjust="spacingAndGlyphs">OFF</text>
<path class="tk" d="M1206 307h25M1206 335h25M1206 565h25M1206 944h25M1206 1137h25M1206 1495h25M1206 1572h25"/>
<rect class="bx" x="1231" y="291" width="100" height="32"/><rect class="bx" x="1231" y="323" width="100" height="30"/><rect class="bx" x="1231" y="549" width="100" height="35"/><rect class="bx" x="1231" y="927" width="100" height="35"/><rect class="bx" x="1231" y="1120" width="100" height="35"/><rect class="bx" x="1231" y="1478" width="100" height="27"/><rect class="bx" x="1231" y="1555" width="100" height="35"/>
<text class="lb" x="1234" y="320" textLength="94" lengthAdjust="spacingAndGlyphs">166.495</text><text class="lb" x="1234" y="349" textLength="94" lengthAdjust="spacingAndGlyphs">166.489</text><text class="lb" x="1234" y="579" textLength="94" lengthAdjust="spacingAndGlyphs">166.436</text><text class="lb" x="1234" y="957" textLength="94" lengthAdjust="spacingAndGlyphs">166.350</text><text class="lb" x="1234" y="1150" textLength="94" lengthAdjust="spacingAndGlyphs">166.306</text><text class="lb" x="1234" y="1503" textLength="94" lengthAdjust="spacingAndGlyphs">166.230</text><text class="lb" x="1234" y="1585" textLength="94" lengthAdjust="spacingAndGlyphs">166.200</text>
<text class="big" x="1215" y="1522" textLength="130" lengthAdjust="spacingAndGlyphs">XU-30</text><text class="big" x="1215" y="1522" textLength="130" lengthAdjust="spacingAndGlyphs">XU-39</text>
<text class="cn" x="1245" y="1545" textLength="165" lengthAdjust="spacingAndGlyphs">嗜偏: 56味</text>
<text class="xu2" x="1148" y="1572" textLength="262" lengthAdjust="spacingAndGlyphs">Xard Universe</text>
<text class="bbw" x="1105" y="1594" textLength="315" lengthAdjust="spacingAndGlyphs">BBwidth: 21.75 pips</text>
<!-- tdi -->
<path class="dm" d="M27 1727h1395M27 1846h1395M27 1892h1395"/>
<polyline class="ub" points="27,1802 90,1815 150,1827 210,1825 290,1770 380,1675 450,1667 520,1690 590,1727 650,1732 780,1778 840,1778 930,1740 1050,1670 1120,1638 1205,1635"/>
<polyline class="ub" points="27,1890 90,1890 150,1913 210,1910 310,1875 400,1850 480,1840 550,1815 600,1820 680,1875 740,1905 800,1900 900,1860 1010,1840 1090,1805 1205,1735"/>
<polyline class="uy" points="27,1845 100,1860 150,1868 210,1865 300,1810 360,1775 440,1755 510,1758 590,1775 680,1810 760,1840 830,1832 900,1805 1020,1755 1120,1710 1205,1690"/>
<polyline class="ug" points="27,1825 60,1850 100,1900 150,1918 200,1840 250,1760 305,1683 360,1683 430,1725 500,1778 540,1775 580,1825 660,1885 730,1910 810,1800 850,1760 910,1735 970,1695 1030,1685 1105,1630 1130,1630 1205,1645"/>
<polyline class="ur" points="27,1787 60,1800 110,1860 150,1902 190,1903 240,1850 290,1730 350,1685 400,1675 470,1705 560,1760 660,1850 740,1892 790,1892 850,1825 910,1760 980,1715 1060,1685 1150,1642 1205,1637"/>
<text x="37" y="1647" textLength="879" lengthAdjust="spacingAndGlyphs">tdi ob1 M1 TDI of Slow rsi of JMA (10,0,0) 77.2351 72.0354 66.8357 76.7954 77.7492</text>
<text class="tr" x="1172" y="1680" textLength="225" lengthAdjust="spacingAndGlyphs">M1 UP TREND</text>
<text x="1430" y="1641" textLength="70" lengthAdjust="spacingAndGlyphs">80.087</text><text x="1430" y="1737" textLength="24" lengthAdjust="spacingAndGlyphs">68</text><text x="1430" y="1857" textLength="24" lengthAdjust="spacingAndGlyphs">55</text><text x="1430" y="1902" textLength="24" lengthAdjust="spacingAndGlyphs">50</text><text x="1430" y="1925" textLength="81" lengthAdjust="spacingAndGlyphs">45.3554</text>
<!-- alerts -->
<path class="sm" d="M27 2077h1395M27 2110h1395M27 2146h1395"/>
<rect x="1426" y="2062" width="29" height="32" fill="#e000e0"/><rect x="1426" y="2095" width="29" height="32" fill="#e000e0"/><rect x="1426" y="2131" width="29" height="32" fill="#e000e0"/>
<text class="mg" x="1428" y="2087">68</text><text class="mg" x="1428" y="2120">50</text><text class="mg" x="1428" y="2156">32</text>
<polyline class="lc" points="27,1982 160,1975 250,1962 400,1965 560,1990 650,2010 735,2055 800,2025 860,1995 980,1960 1040,1965 1120,2000 1200,2005"/>
<polyline class="lc" points="27,2180 120,2223 180,2215 360,2215 430,2180 490,2148 550,2145 590,2165 660,2210 700,2217 820,2230 900,2220 960,2220 1030,2160 1100,2060 1150,2053 1203,2062"/>
<polyline class="ly" points="27,2078 130,2105 180,2090 370,2092 440,2072 530,2065 590,2085 720,2135 780,2132 900,2103 960,2092 1070,2040 1130,2025 1203,2050"/>
<polyline class="lg" points="27,2192 100,2192 130,2125 170,2030 210,2015 270,2017 320,2035 360,2075 400,2063 440,2125 470,2145 500,2145 535,2080 560,2085 600,2185 650,2207 700,2170 770,2030 800,2013 870,2062 920,2050 950,2015 1030,2030 1090,2013 1165,2050 1203,2052"/>
<polyline class="ur" points="27,2100 100,2182 130,2182 200,2090 280,2017 340,2025 400,2050 480,2105 570,2120 640,2155 690,2187 720,2185 800,2075 860,2033 900,2037 1000,2035 1060,2020 1140,2020 1203,2037"/>
<text x="37" y="1978" textLength="521" lengthAdjust="spacingAndGlyphs">TDI Alerts v 104.401 89.969 75.538 79.816 88.488</text>
<text x="1431" y="1974" textLength="81" lengthAdjust="spacingAndGlyphs">135.603</text><text x="1431" y="2217" textLength="44" lengthAdjust="spacingAndGlyphs">0.00</text><text x="1431" y="2235" textLength="76" lengthAdjust="spacingAndGlyphs">-19.755</text>
<!-- spb -->
<path class="dm" d="M27 2401h1395"/>
<polyline class="dy" points="27,2380 130,2388 200,2385 320,2350 400,2335 550,2335 700,2360 760,2375 900,2365 1000,2340 1100,2300 1200,2272"/>
<polyline class="dp" points="27,2420 110,2417 170,2410 210,2415 300,2442 440,2470 550,2465 680,2445 760,2430 920,2438 1040,2480 1130,2510 1200,2523"/>
<polyline class="ur" points="27,2390 90,2398"/><polyline class="ug" points="90,2398 150,2393 220,2355 280,2340 310,2330"/><polyline class="ur" points="310,2330 345,2332"/><polyline class="ug" points="345,2332 380,2327"/><polyline class="ur" points="380,2327 500,2343"/><polyline class="ug" points="500,2343 540,2343"/><polyline class="ur" points="540,2343 690,2378"/><polyline class="ug" points="690,2378 760,2375 820,2357"/><polyline class="ur" points="820,2357 870,2357"/><polyline class="ug" points="870,2357 910,2355 950,2320 1090,2275 1130,2267"/><polyline class="ur" points="1130,2267 1145,2267"/><polyline class="ug" points="1145,2267 1165,2267"/><polyline class="ur" points="1165,2267 1205,2274"/>
<text x="37" y="2297" textLength="1043" lengthAdjust="spacingAndGlyphs">Spb f1 GBPJPY_18S M1 - Super passband filter (40.00,60.00,10) 0.0238 0.0000 -0.0238 0.0240 0.0240</text>
<text x="1431" y="2283" textLength="68" lengthAdjust="spacingAndGlyphs">0.0278</text><text x="1431" y="2411" textLength="44" lengthAdjust="spacingAndGlyphs">0.00</text><text x="1431" y="2528" textLength="76" lengthAdjust="spacingAndGlyphs">-0.0262</text>
<text x="1431" y="2582" textLength="44" lengthAdjust="spacingAndGlyphs">0.00</text>
<text x="92" y="2579" textLength="28" lengthAdjust="spacingAndGlyphs">14</text><text x="681" y="2579" textLength="28" lengthAdjust="spacingAndGlyphs">14</text>
<text x="25" y="2622" textLength="127" lengthAdjust="spacingAndGlyphs">12 Sep 2022</text><text x="182" y="2622" textLength="134" lengthAdjust="spacingAndGlyphs">12 Sep 05:40</text><text x="339" y="2622" textLength="134" lengthAdjust="spacingAndGlyphs">12 Sep 05:42</text><text x="496" y="2622" textLength="134" lengthAdjust="spacingAndGlyphs">12 Sep 05:45</text><text x="652" y="2622" textLength="134" lengthAdjust="spacingAndGlyphs">12 Sep 05:47</text><text x="809" y="2622" textLength="134" lengthAdjust="spacingAndGlyphs">12 Sep 05:49</text><text x="966" y="2622" textLength="134" lengthAdjust="spacingAndGlyphs">12 Sep 05:52</text><text x="1123" y="2622" textLength="134" lengthAdjust="spacingAndGlyphs">12 Sep 05:54</text>
</g>
</svg>
</body></html>
